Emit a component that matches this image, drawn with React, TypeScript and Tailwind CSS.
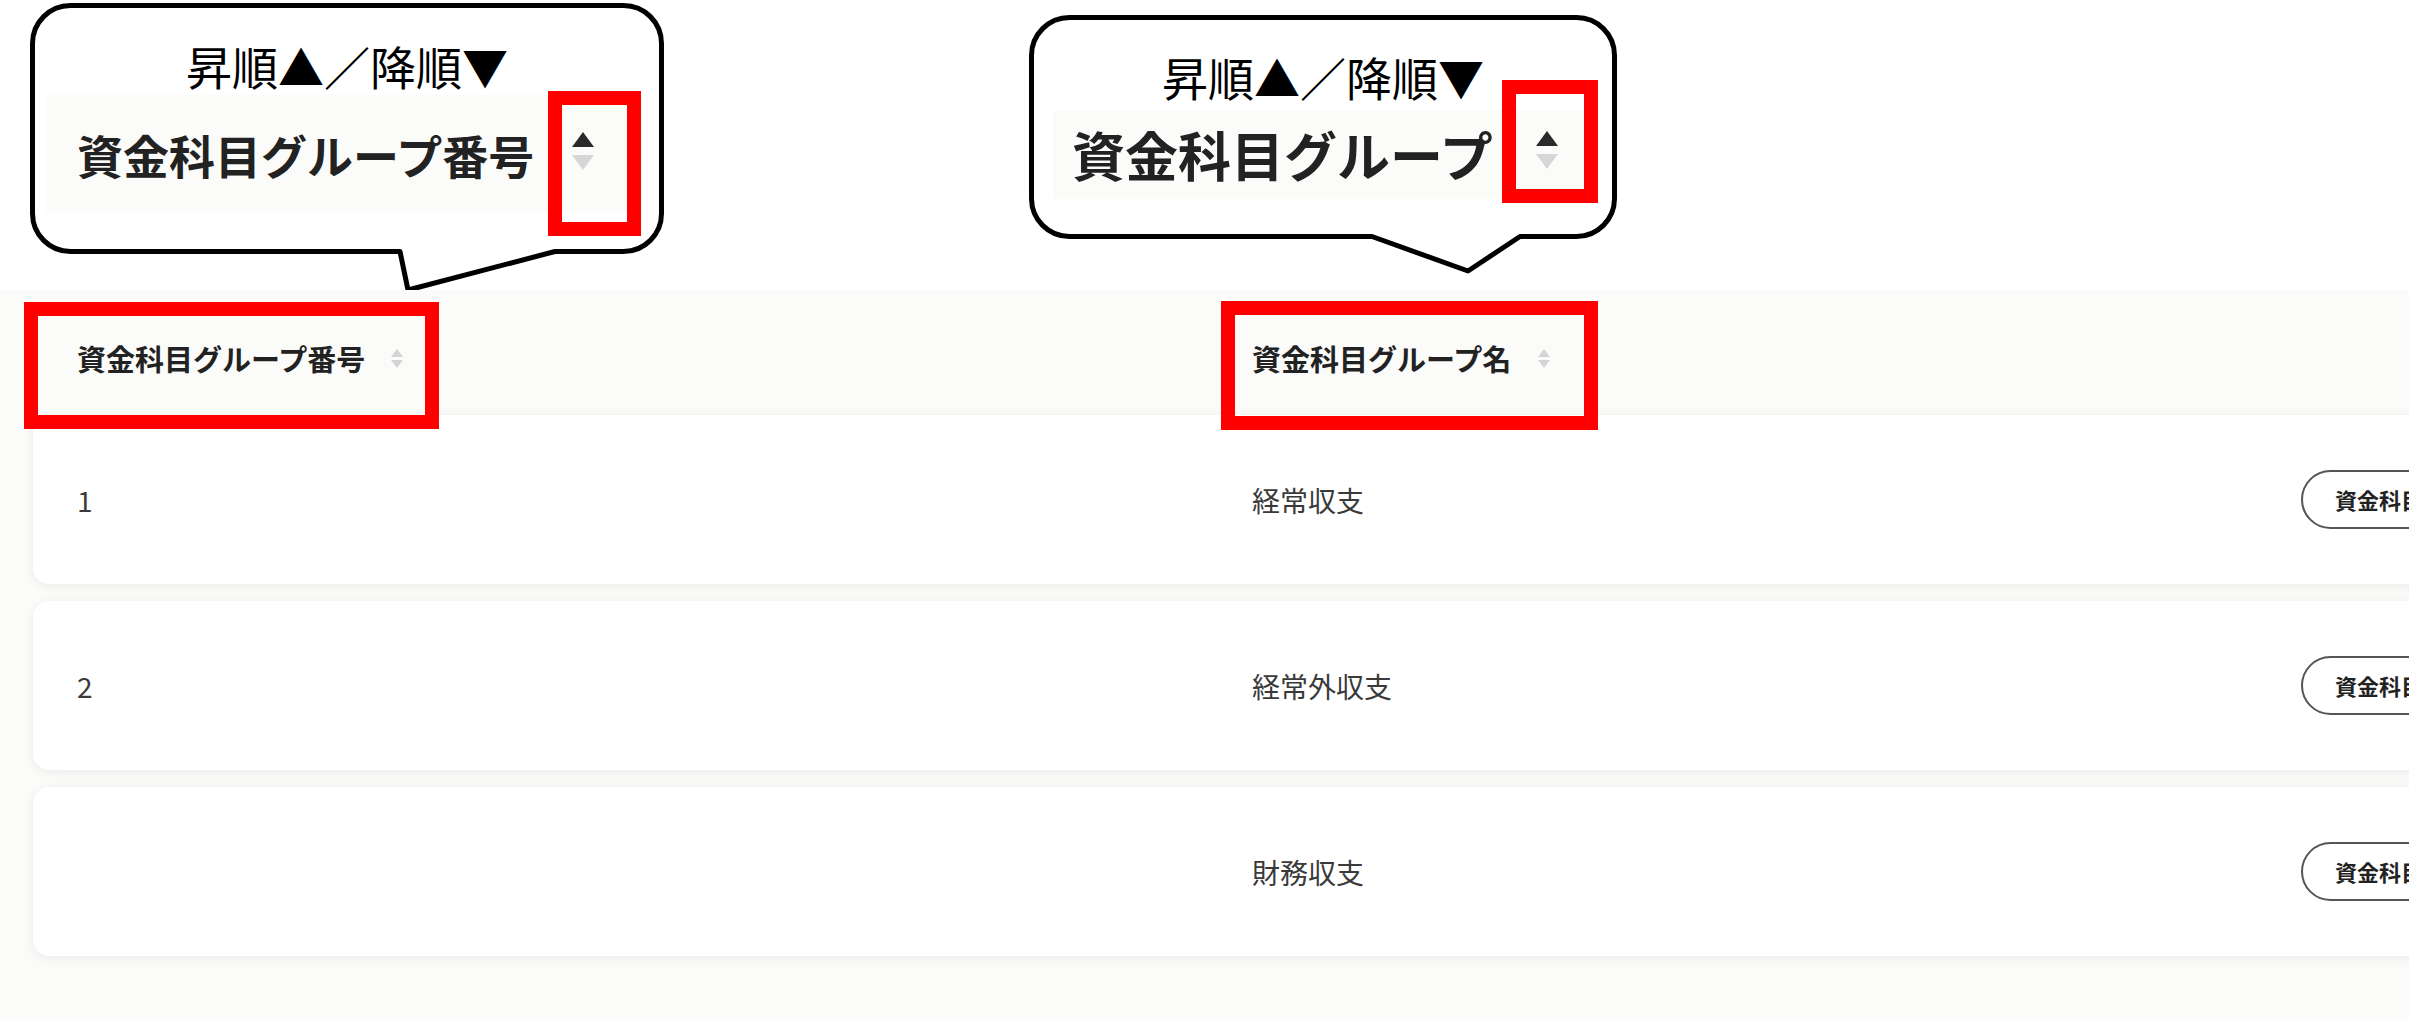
import React from 'react';

type Row = {
  no: string;
  name: string;
};

const rows: Row[] = [
  { no: '1', name: '経常収支' },
  { no: '2', name: '経常外収支' },
  { no: '', name: '財務収支' },
];

const font = "font-['Noto_Sans_CJK_JP','Noto_Sans',sans-serif]";

// small up/down sort arrows
const SortIcon: React.FC<{ big?: boolean }> = ({ big }) => {
  if (big) {
    return (
      <svg width="22" height="38" viewBox="0 0 22 38">
        <path d="M11 0 L22 15 H0 Z" fill="#2a2a2a" />
        <path d="M0 23 H22 L11 38 Z" fill="#d6d6d6" />
      </svg>
    );
  }
  return (
    <svg width="12" height="19" viewBox="0 0 12 19">
      <path d="M6 0 L12 8 H0 Z" fill="#d4d4d4" />
      <path d="M0 11 H12 L6 19 Z" fill="#d4d4d4" />
    </svg>
  );
};

const Callouts: React.FC = () => (
  <div className="relative h-[290px] bg-white">
    <svg className="absolute left-0 top-0 overflow-visible" width="2409" height="290" viewBox="0 0 2409 290">
      <path
        d="M 70.5 5.5 H 623.5 A 38 38 0 0 1 661.5 43.5 V 213.5 A 38 38 0 0 1 623.5 251.5 H 555 L 408 290 L 400 251.5 H 70.5 A 38 38 0 0 1 32.5 213.5 V 43.5 A 38 38 0 0 1 70.5 5.5 Z"
        fill="#fff"
        stroke="#000"
        strokeWidth="5"
        strokeLinejoin="round"
      />
      <path
        d="M 1069.5 17.5 H 1576.5 A 38 38 0 0 1 1614.5 55.5 V 198.5 A 38 38 0 0 1 1576.5 236.5 H 1520 L 1468 271 L 1372 236.5 H 1069.5 A 38 38 0 0 1 1031.5 198.5 V 55.5 A 38 38 0 0 1 1069.5 17.5 Z"
        fill="#fff"
        stroke="#000"
        strokeWidth="5"
        strokeLinejoin="round"
      />
    </svg>

    {/* callout 1 */}
    <div className="absolute left-[30px] top-[3px] w-[634px] h-[251px]">
      <div className="mt-[39px] text-center text-[46px] leading-[46px] text-black">昇順▲／降順▼</div>
      <div className="ml-[16px] mt-[7px] flex h-[117px] w-[584px] items-center bg-[#fbfbf9] pl-[31px]">
        <span className="text-[46px] font-bold leading-[46px] text-[#222]">資金科目グループ番号</span>
        <span className="ml-[38px] -mt-[6px]">
          <SortIcon big />
        </span>
      </div>
      <div className="absolute left-[518px] top-[88px] h-[145px] w-[93px] border-[14px] border-[#ff0000]" />
    </div>

    {/* callout 2 */}
    <div className="absolute left-[1029px] top-[15px] w-[588px] h-[224px]">
      <div className="mt-[38px] text-center text-[46px] leading-[46px] text-black">昇順▲／降順▼</div>
      <div className="ml-[24px] mt-[11px] flex h-[89px] w-[537px] items-center bg-[#fbfbf9] pl-[19px]">
        <span className="text-[53px] font-bold leading-[53px] text-[#222]">資金科目グループ</span>
        <span className="ml-[43px] -mt-[10px]">
          <SortIcon big />
        </span>
      </div>
      <div className="absolute left-[473px] top-[65px] h-[123px] w-[96px] border-[14px] border-[#ff0000]" />
    </div>
  </div>
);

export default function App() {
  return (
    <div className={`${font} flex h-[1021px] w-[2409px] flex-col overflow-hidden bg-white`}>
      <Callouts />

      <div className="relative flex-1 bg-[#fbfbf9]">
        {/* header */}
        <div className="ml-[33px] grid h-[125px] grid-cols-[1175px_1049px_auto] items-start pl-[44px] pt-[54px]">
          <div className="flex items-center text-[29px] font-bold leading-[29px] text-[#222]">
            資金科目グループ番号
            <span className="ml-[26px]">
              <SortIcon />
            </span>
          </div>
          <div className="flex items-center text-[29px] font-bold leading-[29px] text-[#222]">
            資金科目グループ名
            <span className="ml-[27px]">
              <SortIcon />
            </span>
          </div>
          <div />
        </div>

        {/* rows */}
        <div className="ml-[33px] flex w-[2440px] flex-col gap-[17px]">
          {rows.map((r, i) => (
            <div
              key={i}
              className="grid h-[169px] grid-cols-[1175px_1049px_auto] items-center rounded-[16px] bg-white pl-[44px] shadow-[0_2px_12px_rgba(0,0,0,0.07)]"
            >
              <div className="text-[28px] text-[#3a3a3a]">{r.no}</div>
              <div className="text-[28px] text-[#3a3a3a]">{r.name}</div>
              <div>
                <button className="flex h-[59px] items-center whitespace-nowrap rounded-full border-2 border-[#555] bg-white pl-[32px] pr-[32px] text-[22px] font-bold text-[#222]">
                  資金科目一覧
                </button>
              </div>
            </div>
          ))}
        </div>

        {/* highlight boxes */}
        <div className="absolute left-[24px] top-[12px] h-[127px] w-[415px] border-[14px] border-[#ff0000]" />
        <div className="absolute left-[1221px] top-[11px] h-[129px] w-[377px] border-[14px] border-[#ff0000]" />
      </div>
    </div>
  );
}
